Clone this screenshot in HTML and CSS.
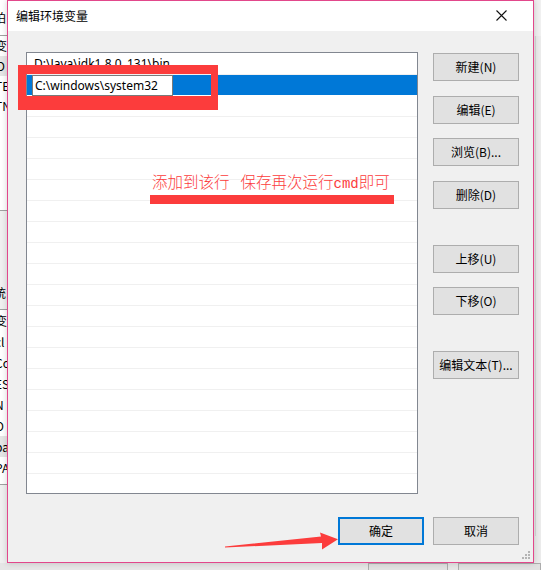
FILE: index.html
```html
<!DOCTYPE html>
<html lang="zh-CN">
<head>
<meta charset="utf-8">
<title>编辑环境变量</title>
<link rel="stylesheet" href="styles.css">
</head>
<body>
<div class="desk">
  <div class="bg-left">
    <div class="bl-top">拍</div>
    <div class="bl-list">
      <div class="bl-row">变</div>
      <div class="bl-row hl">O</div>
      <div class="bl-row">TE</div>
      <div class="bl-row">TN</div>
    </div>
    <div class="bl-head">统</div>
    <div class="bl-list2">
      <div class="bl-row">变</div>
      <div class="bl-row">cl</div>
      <div class="bl-row">Co</div>
      <div class="bl-row">ES</div>
      <div class="bl-row">N</div>
      <div class="bl-row">O</div>
      <div class="bl-row hl">pa</div>
      <div class="bl-row">PA</div>
    </div>
  </div>

  <div class="dialog">
    <div class="titlebar">
      <span class="title">编辑环境变量</span>
      <svg class="close" width="11" height="11" viewBox="0 0 11 11"><path d="M0.5 0.5 L10.5 10.5 M10.5 0.5 L0.5 10.5" stroke="#111" stroke-width="1.1" fill="none"/></svg>
    </div>
    <div class="dbody">
      <div class="main">
        <div class="listbox">
          <div class="row">D:\Java\jdk1.8.0_131\bin</div>
          <div class="row sel"><div class="edit">C:\windows\system32</div></div>
          <div class="row"></div><div class="row"></div><div class="row"></div><div class="row"></div>
          <div class="row"></div><div class="row"></div><div class="row"></div><div class="row"></div>
          <div class="row"></div><div class="row"></div><div class="row"></div><div class="row"></div>
          <div class="row"></div><div class="row"></div><div class="row"></div><div class="row"></div>
          <div class="row"></div><div class="row"></div>
        </div>
        <div class="btns">
          <button class="btn">新建(N)</button>
          <button class="btn g15">编辑(E)</button>
          <button class="btn g14">浏览(B)...</button>
          <button class="btn g15">删除(D)</button>
          <button class="btn g36">上移(U)</button>
          <button class="btn g14">下移(O)</button>
          <button class="btn g36">编辑文本(T)...</button>
        </div>
      </div>
      <div class="footer">
        <button class="btn ok">确定</button>
        <button class="btn">取消</button>
      </div>
    </div>
    <svg class="grip" width="9" height="9" viewBox="0 0 9 9" fill="#b4b4b4">
      <rect x="6" y="0" width="2" height="2"/>
      <rect x="3" y="3" width="2" height="2"/><rect x="6" y="3" width="2" height="2"/>
      <rect x="0" y="6" width="2" height="2"/><rect x="3" y="6" width="2" height="2"/><rect x="6" y="6" width="2" height="2"/>
    </svg>
  </div>

  <div class="bg-right">
    <div class="br-scroll"></div>
  </div>
  <div class="bg-bottom">
    <div class="bb-btn b1"></div>
    <div class="bb-btn b2"></div>
  </div>

  <div class="anno-box"></div>
  <div class="anno-text">添加到该行<span class="gap"></span>保存再次运行<span class="mono">cmd</span>即可</div>
  <div class="anno-line"></div>
  <svg class="anno-arrow" width="125" height="25" viewBox="220 528 125 25">
    <polygon points="225,546.5 321,536.5 320,532.5 338,539.3 322,549.5 322,543 225,547.5" fill="#fc3c3c"/>
  </svg>
</div>
</body>
</html>
```

FILE: styles.css
```css
* { box-sizing: border-box; }
html, body { margin: 0; padding: 0; }
body {
  width: 541px;
  height: 570px;
  overflow: hidden;
  background: #f0f0f0;
  font-family: "Noto Sans", "Noto Sans CJK SC", sans-serif;
  font-size: 12px;
  color: #000;
}
.desk {
  position: relative;
  display: grid;
  grid-template-columns: 7px 527px 7px;
  grid-template-rows: 563px 7px;
  width: 541px;
  height: 570px;
}

/* background window fragments */
.bg-left {
  grid-column: 1;
  grid-row: 1;
  overflow: hidden;
  background: #f0f0f0;
  display: flex;
  flex-direction: column;
  font-family: "Noto Sans CJK SC", "Noto Sans", sans-serif;
  font-size: 12px;
  line-height: 20px;
  color: #000;
}
.bl-top {
  height: 36px;
  background: #fff;
  border-bottom: 1px solid #a0a0a0;
  padding-top: 8px;
  text-indent: -6px;
}
.bl-list { height: 175px; background: #fff; border-bottom: 1px solid #a0a0a0; }
.bl-row { height: 20px; text-indent: -5px; white-space: nowrap; }
.bl-row.hl { background: #e5e5e5; }
.bl-list > .bl-row:nth-child(2) { text-indent: -4px; }
.bl-head {
  height: 99px;
  padding-top: 72px;
  text-indent: -6px;
  border-bottom: 1px solid #a0a0a0;
  background: #f0f0f0;
}
.bl-list2 { height: 175px; background: #fff; border-bottom: 1px solid #a0a0a0; }
.bl-list2 .bl-row { height: 21px; line-height: 21px; }

.bg-right {
  grid-column: 3;
  grid-row: 1;
  background: #ebebeb;
  border-top: 36px solid #f0f0f0;
}
.br-scroll {
  margin: 0 0 0 1px;
  height: 500px;
  border-left: 1px solid #d6d6d6;
}
.bg-bottom {
  grid-column: 1 / 4;
  grid-row: 2;
  background: #e6e6e6;
  display: flex;
  padding-left: 368px;
  gap: 10px;
}
.bb-btn {
  height: 7px;
  border: 1px solid #adadad;
  border-bottom: none;
  background: #e1e1e1;
}
.bb-btn.b1 { width: 86px; }
.bb-btn.b2 { width: 90px; }

/* dialog */
.dialog {
  grid-column: 2;
  grid-row: 1;
  position: relative;
  border: 1px solid #e2478b;
  background: #f0f0f0;
  display: flex;
  flex-direction: column;
  box-shadow: 0 0 6px rgba(0,0,0,0.18);
}
.titlebar {
  height: 30px;
  background: #fff;
  display: flex;
  align-items: center;
  justify-content: space-between;
  padding: 0 26px 0 8px;
}
.title {
  font-family: "Noto Sans CJK SC", sans-serif;
  font-size: 12px;
  line-height: 14px;
  margin-top: -1px;
}
.close { display: block; margin-top: -2px; }
.dbody {
  flex: 1;
  padding: 21px 14px 17px 18px;
  display: flex;
  flex-direction: column;
}
.main {
  display: flex;
  gap: 15px;
  height: 442px;
}
.listbox {
  width: 392px;
  height: 442px;
  border: 1px solid #828790;
  background: #fff;
  padding-top: 1px;
  overflow: hidden;
}
.row {
  height: 21px;
  border-bottom: 1px solid #f0f0f0;
  padding-left: 7px;
  line-height: 20px;
  white-space: nowrap;
  font-size: 12px;
}
.row.sel {
  background: #0078d7;
  padding-left: 5px;
  border-bottom-color: #fff;
}
.edit {
  width: 141px;
  height: 21px;
  border: 1px solid #7a7a7a;
  background: #fff;
  padding-left: 2px;
  line-height: 19px;
  font-size: 12px;
}
.btns {
  width: 86px;
  display: flex;
  flex-direction: column;
  padding-top: 1px;
}
.btn {
  width: 86px;
  height: 28px;
  margin: 0;
  padding: 0;
  border: 1px solid #adadad;
  background: #e1e1e1;
  font-family: "Noto Sans CJK SC", sans-serif;
  font-size: 12px;
  color: #000;
  line-height: 16px;
}
.g14 { margin-top: 14px; }
.g15 { margin-top: 15px; }
.g36 { margin-top: 36px; }
.footer {
  margin-top: 23px;
  display: flex;
  justify-content: flex-end;
  gap: 9px;
}
.btn.ok { border: 2px solid #0078d7; }
.grip {
  position: absolute;
  right: 2px;
  bottom: 2px;
}

/* annotations */
.anno-box {
  position: absolute;
  left: 18px;
  top: 65px;
  width: 200px;
  height: 45px;
  border-style: solid;
  border-color: #fc3c3c;
  border-width: 9px 7px 14px 8px;
}
.anno-text {
  position: absolute;
  left: 152px;
  top: 172px;
  font-family: "Noto Sans CJK SC", sans-serif;
  font-size: 15.5px;
  font-weight: 300;
  line-height: 18px;
  color: #fc3c3c;
  white-space: nowrap;
}
.gap { display: inline-block; width: 11px; }
.mono { font-family: "Liberation Mono", monospace; font-size: 14px; }
.anno-line {
  position: absolute;
  left: 150px;
  top: 195px;
  width: 244px;
  height: 9px;
  background: #fc3c3c;
}
.anno-arrow {
  position: absolute;
  left: 220px;
  top: 528px;
}
```
